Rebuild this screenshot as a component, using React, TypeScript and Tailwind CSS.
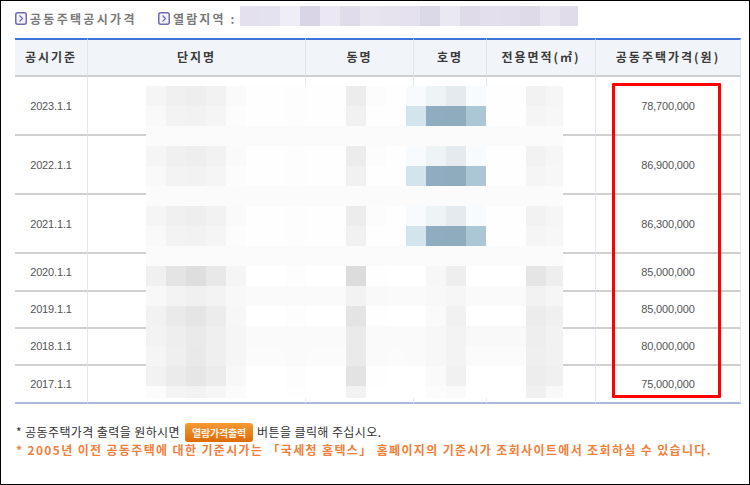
import React from "react";

const topBlocks = ["#e4e0ed","#e5e2ef","#efedf6","#d9d5e6","#ebe8f2","#e0dcea","#e8e5f1","#e6e2ee","#e5e1ee","#dbd8e7","#eae8f3","#dfdbe9","#e3dfec","#e2deeb","#dedae8","#e8e5f1","#e1dcea"];

const A = ["#f5f5f5","#f0f0f0","#eeeeee","#f2f2f2","#fafafa","#fefefe","#fefefe","#fdfdfd","#fefefe","#fefefe","#ececec","#fcfcfc","#fefefe","#f8fbfd","#eef3f6","#e5eaee","#f7fbfe","#fefefe","#fefefe","#f2f2f2","#f6f6f6"];
const B = ["#f9f9f9","#f3f3f3","#f2f2f2","#f5f5f5","#fcfcfc","#fefefe","#fefefe","#fdfdfd","#fefefe","#fefefe","#f1f1f1","#fefefe","#fefefe","#d4e4ed","#8fadbf","#8eacbe","#abc6d5","#fefefe","#fefefe","#f5f5f5","#f7f7f7"];
const C = Array(21).fill("#fbfbfb");

const hex = (s: string) => s.split(" ").map((v) => "#" + v + v + v);
const mosaic: string[][] = [
  A, B, C, A, B, C, A, B, C,
  hex("f0 e4 de e8 f5 ff ff fd ff ff dc fe ff ff f7 ee ff ff ff e5 ee"),
  hex("f8 f3 f0 f3 f8 fa fa fa fa fa f2 f9 fa fa f8 f6 fa fa fa f2 f6"),
  hex("f2 ea e5 ec f7 ff ff fd ff ff e4 fe ff ff fa f1 ff ff ff ec f0"),
  hex("f3 ee ea ef f6 fa fa fa fa fa ea fa fa fa f7 f3 f9 f9 f9 ee f2"),
  hex("f5 ef e9 ef f6 fb fb fa fb fb ea fa fb fa f7 f3 fb fb fb ef f2"),
  hex("f2 eb e6 ec f8 ff ff fd ff ff e3 fe ff ff fa f1 ff ff ff ed f0"),
  hex("fc f4 f2 f6 fb ff ff fe ff ff f2 ff ff ff fc fa ff ff ff f0 f9"),
];

const rows = [
  { date: "2023.1.1", price: "78,700,000", h: "h-[59px] pt-[1px]" },
  { date: "2022.1.1", price: "86,900,000", h: "h-[59px] pt-[1px]" },
  { date: "2021.1.1", price: "86,300,000", h: "h-[59px] pt-[1px]" },
  { date: "2020.1.1", price: "85,000,000", h: "h-[38px]" },
  { date: "2019.1.1", price: "85,000,000", h: "h-[37px]" },
  { date: "2018.1.1", price: "80,000,000", h: "h-[37px]" },
  { date: "2017.1.1", price: "75,000,000", h: "h-[38px]" },
];

const headers = ["공시기준", "단지명", "동명", "호명", "전용면적(㎡)", "공동주택가격(원)"];

function Bullet() {
  return (
    <svg width="12" height="13" viewBox="0 0 12 13" className="shrink-0">
      <rect x="0.75" y="0.75" width="10.5" height="11.5" rx="2" fill="#f4f3fb" stroke="#6f6bb5" strokeWidth="1.5" />
      <path d="M4.5 3.5 L7.5 6.5 L4.5 9.5" fill="none" stroke="#6f6bb5" strokeWidth="1.2" />
    </svg>
  );
}

export default function App() {
  return (
    <div className="w-[750px] h-[485px] border border-black bg-white overflow-hidden [font-family:'Noto_Sans_CJK_KR','Liberation_Sans',sans-serif]">
      <div className="flex h-[37px] pl-[14px] pt-[5px]">
        <div className="flex items-center gap-[3px] h-[24px] w-[143px] pt-[1px] text-[12px] font-bold text-[#7a7a7a] tracking-[2.3px]">
          <Bullet />
          <span>공동주택공시가격</span>
        </div>
        <div className="flex items-center gap-[3px] h-[24px] w-[82px] pt-[1px] text-[12px] font-bold text-[#7a7a7a] tracking-[2.1px] whitespace-nowrap">
          <Bullet />
          <span>열람지역 :</span>
        </div>
        <div className="flex h-[20px]">
          {topBlocks.map((c, i) => (
            <div key={i} className={i === 16 ? "w-[18px] h-full" : "w-[20px] h-full"} style={{ background: c }} />
          ))}
        </div>
      </div>

      <div className="relative w-[726px] ml-[14px]">
        <table className="w-[726px] table-fixed border-separate border-spacing-0">
          <colgroup>
            <col className="w-[73px]" />
            <col className="w-[218px]" />
            <col className="w-[108px]" />
            <col className="w-[73px]" />
            <col className="w-[109px]" />
            <col className="w-[145px]" />
          </colgroup>
          <thead>
            <tr>
              {headers.map((h) => (
                <th
                  key={h}
                  className="h-[39px] p-0 pb-[2px] border-t-2 border-t-[#3f74dc] border-b-2 border-b-[#cfcfcf] border-r border-r-[#dfe6ee] bg-[#f1f4f9] text-center text-[12px] font-bold text-[#3a3a3a] tracking-[2px]"
                >
                  {h}
                </th>
              ))}
            </tr>
          </thead>
          <tbody>
            {rows.map((r, i) => {
              const line = i === rows.length - 1 ? "border-b-[#a9b9dc]" : "border-b-[#d0d0d0]";
              const cell = `p-0 border-b-2 border-r border-r-[#e3e9f0] text-center text-[11px] text-[#555555] [font-family:'Liberation_Sans',sans-serif] ${line} ${r.h}`;
              return (
                <tr key={r.date}>
                  <td className={`${cell} tracking-[-0.15px]`}>{r.date}</td>
                  <td className={cell} />
                  <td className={cell} />
                  <td className={cell} />
                  <td className={cell} />
                  <td className={`${cell} tracking-[-0.15px]`}>{r.price}</td>
                </tr>
              );
            })}
          </tbody>
        </table>

        <div className="absolute left-[131px] top-[48px] w-[417px]">
          {mosaic.map((row, y) => (
            <div key={y} className={y === 15 ? "flex h-[12px]" : "flex h-[20px]"}>
              {row.map((c, x) => (
                <div key={x} className={x === 20 ? "w-[17px] h-full" : "w-[20px] h-full"} style={{ background: c }} />
              ))}
            </div>
          ))}
        </div>

        <div className="absolute left-[597px] top-[45px] w-[109px] h-[315px] border-[3px] border-[#ff0000] rounded-[1px]" />
      </div>

      <div className="pl-[15px] pt-[19px] text-[12px]">
        <div className="flex items-center h-[19px] text-[#333333] tracking-[0.4px] whitespace-pre">
          <span className="pb-[1px]">* 공동주택가격 출력을 원하시면 </span>
          <span className="flex items-center justify-center w-[68px] h-[19px] ml-[2px] mr-[4px] rounded-[3px] bg-gradient-to-b from-[#f59a32] to-[#dd6a04] text-[10px] font-bold text-[#fff1e2] tracking-[-0.2px]">
            열람가격출력
          </span>
          <span className="pb-[1px]">버튼을 클릭해 주십시오.</span>
        </div>
        <div className="flex items-center h-[18px] pb-[2px] font-bold text-[#f0803a] tracking-[1.35px] whitespace-pre">
          * 2005년 이전 공동주택에 대한 기준시가는 「국세청 홈텍스」 홈페이지의 기준시가 조회사이트에서 조회하실 수 있습니다.
        </div>
      </div>
    </div>
  );
}
